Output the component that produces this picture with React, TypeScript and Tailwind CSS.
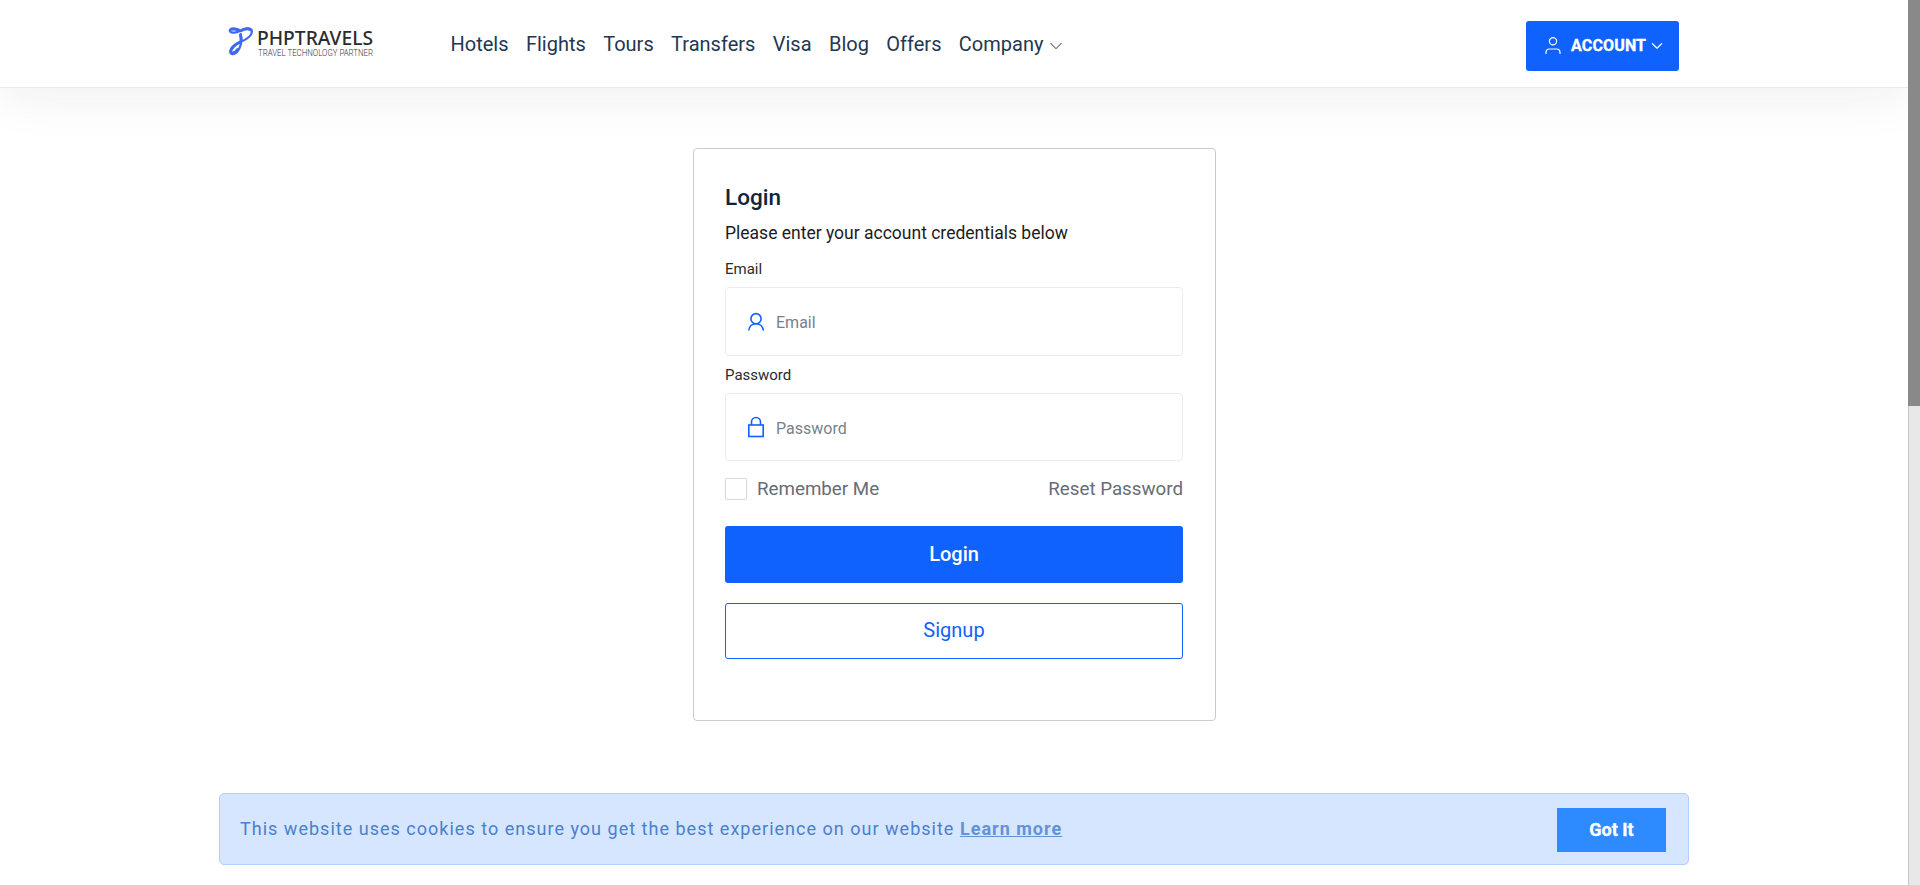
import React from "react";

const NAV = ["Hotels", "Flights", "Tours", "Transfers", "Visa", "Blog", "Offers"];

function Chevron({ className }: { className: string }) {
  return (
    <svg viewBox="0 0 16 16" fill="currentColor" className={className}>
      <path
        fillRule="evenodd"
        d="M1.646 4.646a.5.5 0 0 1 .708 0L8 10.293l5.646-5.647a.5.5 0 0 1 .708.708l-6 6a.5.5 0 0 1-.708 0l-6-6a.5.5 0 0 1 0-.708z"
      />
    </svg>
  );
}

function Logo() {
  return (
    <svg width="160" height="42" viewBox="0 0 160 42" className="block overflow-visible">
      <g fill="none" stroke="#4169f0" strokeLinecap="round" strokeLinejoin="round">
        <path d="M10.500 5C7 2.800 2.200 3.200 1.800 5.400C1.800 7.900 7.500 8.500 12 6C16 3.400 23.700 2.500 23.900 6.400C24 10.500 18.500 14.500 12.500 17C7 19.300 2.900 22.500 2.300 26.300C2 29.600 6 30.200 9 27C12.800 22.500 14.300 16.500 12.700 9" strokeWidth="2.300" />
        <path d="M3.500 4.200C6 3.400 8.500 4.200 10.500 5M13 5.700C16.500 3.700 21 3.100 22.600 4.700M13 16.700C8.500 18.600 4.500 21.800 3 25.200M12.500 10C13.100 12 13.200 13.500 13 15.500M4 28C6 28.300 8 26.800 9.500 24.500" strokeWidth="3" />
      </g>
      <text x="29" y="19.500" fontFamily="'Noto Sans', sans-serif" fontSize="19" fontWeight="500" fill="#2b2b2b" textLength="116" lengthAdjust="spacingAndGlyphs">
        PHPTRAVELS
      </text>
      <text x="30" y="30.700" fontFamily="Roboto, sans-serif" fontSize="8.200" fontWeight="300" fill="#333" textLength="115" lengthAdjust="spacingAndGlyphs">
        TRAVEL TECHNOLOGY PARTNER
      </text>
    </svg>
  );
}

function Header() {
  return (
    <header className="h-[88px] border-b border-[#ebebeb] bg-white shadow-[0_10px_50px_rgba(8,30,25,0.065)]">
      <div className="mx-auto flex h-[87px] w-[1470px] items-start">
        <a href="#" className="ml-[9px] mt-[25px] w-[160px]">
          <Logo />
        </a>
        <nav className="ml-[62.5px] mt-[29px] flex gap-[17.4px] text-[20px] leading-[30px] text-[#243750]">
          {NAV.map((n) => (
            <a key={n} href="#">{n}</a>
          ))}
          <a href="#" className="flex items-center">
            Company
            <Chevron className="ml-[6px] mt-[3px] h-[14px] w-[14px] text-[#5b6470]" />
          </a>
        </nav>
        <button className="ml-auto mr-[10px] mt-[21px] flex h-[50px] w-[153px] items-center rounded-[3px] bg-[#0f62fe] pl-[18px] text-white">
          <svg viewBox="0 0 18 18" className="h-[18px] w-[18px]" fill="none" stroke="currentColor" strokeWidth="1.200">
            <circle cx="9" cy="4.300" r="3.600" />
            <path d="M2 17V15.500C2 13.200 3.300 12 5.500 12H12.500C14.700 12 16 13.200 16 15.500V17" />
          </svg>
          <span className="ml-[9px] text-[16px] font-bold leading-[24px] tracking-[0.15px] [-webkit-text-stroke:0.35px_white]">ACCOUNT</span>
          <Chevron className="ml-[5px] h-[12px] w-[12px] stroke-current" />
        </button>
      </div>
    </header>
  );
}

function UserIcon() {
  return (
    <svg viewBox="0 0 18 20" className="h-[20px] w-[18px]" fill="none" stroke="#0f62fe" strokeWidth="1.600">
      <circle cx="9" cy="6.700" r="5.100" />
      <path d="M1.700 18.500C2.100 14.500 5 11.700 9 11.700S15.900 14.500 16.300 18.500" />
    </svg>
  );
}

function LockIcon() {
  return (
    <svg viewBox="0 0 18 22" className="h-[22px] w-[18px]" fill="none" stroke="#0f62fe" strokeWidth="1.600">
      <rect x="1.800" y="9" width="14.400" height="11.500" />
      <path d="M4.500 9V6A4.500 4.500 0 0 1 13.500 6V9" />
    </svg>
  );
}

function LoginCard() {
  return (
    <form className="ml-[693px] mt-[60px] h-[573px] w-[523px] rounded-[4px] border border-[#cbcbcb] bg-white pl-[31px] pr-[32px]">
      <h1 className="mt-[33px] text-[22.5px] font-medium leading-[30px] text-[#0d233e]">Login</h1>
      <p className="mt-[7px] text-[17.5px] leading-[28px] text-[#1c1c1c]">Please enter your account credentials below</p>
      <label className="mt-[12px] block text-[15px] leading-[20px] text-[#2a2a2a]">Email</label>
      <div className="mt-[8px] flex h-[69px] items-center rounded-[4px] border border-[#ececec] pl-[21px]">
        <UserIcon />
        <span className="ml-[11px] mt-[3px] text-[16px] leading-[24px] text-[#78818a]">Email</span>
      </div>
      <label className="mt-[9px] block text-[15px] leading-[20px] text-[#2a2a2a]">Password</label>
      <div className="mt-[8px] flex h-[68px] items-center rounded-[4px] border border-[#ececec] pl-[21px]">
        <LockIcon />
        <span className="ml-[11px] mt-[4px] text-[16px] leading-[24px] text-[#78818a]">Password</span>
      </div>
      <div className="mt-[17px] flex h-[22px] items-center text-[18.75px] leading-[22px] text-[#666d76]">
        <span className="h-[22px] w-[22px] rounded-[2px] border border-[#d8d8d8]" />
        <span className="ml-[10px]">Remember Me</span>
        <a href="#" className="ml-auto">Reset Password</a>
      </div>
      <button type="button" className="mt-[26px] block h-[57px] w-full rounded-[3px] bg-[#0f62fe] pb-[2px] text-[20px] font-medium text-white">
        Login
      </button>
      <button type="button" className="mt-[20px] block h-[56px] w-full rounded-[3px] border border-[#0f62fe] pb-[2px] text-[20px] text-[#0f62fe]">
        Signup
      </button>
    </form>
  );
}

function CookieBar() {
  return (
    <div className="mx-auto mt-[72px] flex h-[72px] w-[1470px] items-center rounded-[5px] border border-[#b0d0ff] bg-[#d6e6ff] pl-[20px] pr-[22px]">
      <p className="mb-[2px] text-[18px] leading-[27px] tracking-[1.015px] text-[#4a80cc]">
        This website uses cookies to ensure you get the best experience on our website{" "}
        <a href="#" className="font-bold text-[#6492d6] underline">Learn more</a>
      </p>
      <button className="ml-auto mt-[2px] h-[44px] w-[109px] bg-[#2e8bff] pb-[2px] text-[18px] font-bold text-white [-webkit-text-stroke:0.35px_white]">Got It</button>
    </div>
  );
}

export default function App() {
  return (
    <div className="flex h-[885px] w-[1920px] overflow-hidden bg-white font-['Roboto',sans-serif]">
      <main className="h-full w-[1908px] overflow-hidden">
        <Header />
        <LoginCard />
        <CookieBar />
      </main>
      <div className="h-full w-[12px] border-l border-[#c6c6c6] bg-[#e8e8e8]">
        <div className="-ml-px h-[406px] w-[12px] bg-[#888988]" />
      </div>
    </div>
  );
}
